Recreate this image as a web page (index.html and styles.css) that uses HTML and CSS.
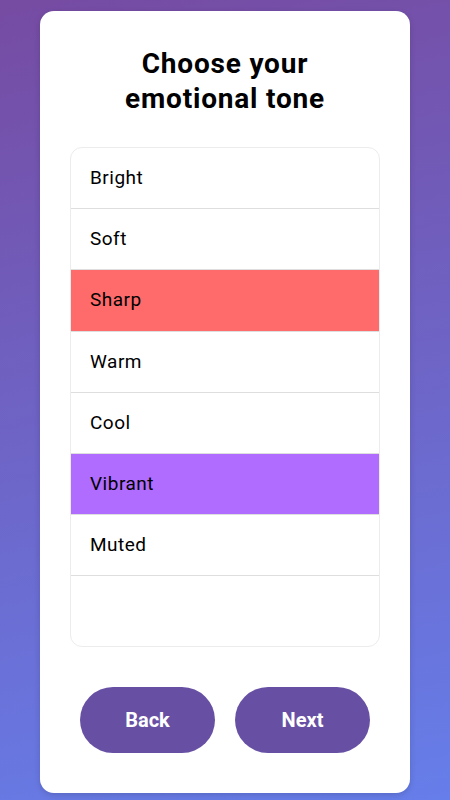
FILE: index.html
```html
<!DOCTYPE html>
<html lang="en">
<head>
<meta charset="utf-8">
<title>Choose your emotional tone</title>
<link rel="stylesheet" href="styles.css">
</head>
<body>
<main class="card">
  <h1 class="title">Choose your<br>emotional tone</h1>
  <ul class="options">
    <li class="option">Bright</li>
    <li class="option">Soft</li>
    <li class="option option-sharp">Sharp</li>
    <li class="option">Warm</li>
    <li class="option">Cool</li>
    <li class="option option-vibrant">Vibrant</li>
    <li class="option">Muted</li>
  </ul>
  <div class="actions">
    <button class="btn">Back</button>
    <button class="btn">Next</button>
  </div>
</main>
</body>
</html>
```

FILE: styles.css
```css
* { box-sizing: border-box; }
html, body { height: 100%; }
body {
  margin: 0;
  padding: 11px 40px 7px;
  background: linear-gradient(168deg, #764ba2 0%, #667eea 100%);
  font-family: Roboto, "Noto Sans", sans-serif;
  color: #000;
}
.card {
  background: #fff;
  border-radius: 14px;
  height: 782px;
  padding: 35px 30px 40px;
  display: flex;
  flex-direction: column;
  box-shadow: 0 2px 6px rgba(0,0,0,0.15);
}
.title {
  margin: 0 0 31px;
  font-size: 28px;
  line-height: 35px;
  font-weight: 700;
  letter-spacing: 0.8px;
  text-align: center;
}
.options {
  list-style: none;
  margin: 0;
  padding: 0;
  height: 500px;
  border: 1px solid #ececec;
  border-radius: 12px;
  overflow: hidden;
}
.option {
  padding: 20px 19px;
  font-size: 19px;
  line-height: 20.2px;
  letter-spacing: 0.5px;
  border-bottom: 1px solid #dedede;
}
.option-sharp { background: #ff6b6b; }
.option-vibrant { background: #b06bff; }
.actions {
  margin-top: 40px;
  padding: 0 10px;
  display: flex;
  gap: 20px;
}
.btn {
  flex: 1;
  height: 66px;
  border: none;
  border-radius: 33px;
  background: #6750a4;
  color: #fff;
  font-family: Roboto, "Noto Sans", sans-serif;
  font-size: 20px;
  font-weight: 700;
}
```
